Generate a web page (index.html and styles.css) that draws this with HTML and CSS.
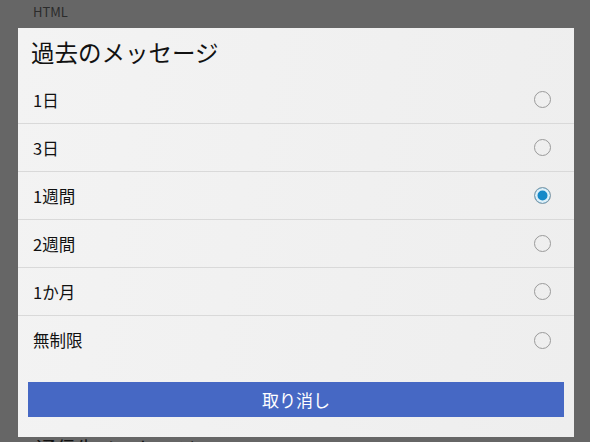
FILE: index.html
```html
<!DOCTYPE html>
<html lang="ja">
<head>
    <meta charset="UTF-8">
    <meta name="viewport" content="width=device-width, initial-scale=1.0">
    <title>過去のメッセージ</title>
    <link rel="stylesheet" href="styles.css">
</head>
<body>
    <div class="page-title">HTML</div>

    <div class="dialog">
        <h1>過去のメッセージ</h1>
        <ul class="options">
            <li class="option"><span>1日</span><span class="radio"></span></li>
            <li class="option"><span>3日</span><span class="radio"></span></li>
            <li class="option"><span>1週間</span><span class="radio checked"></span></li>
            <li class="option"><span>2週間</span><span class="radio"></span></li>
            <li class="option"><span>1か月</span><span class="radio"></span></li>
            <li class="option"><span>無制限</span><span class="radio"></span></li>
        </ul>
        <button class="cancel">取り消し</button>
    </div>

    <div class="section-title">通信先メッセージ</div>
</body>
</html>
```

FILE: styles.css
```css
body {
    margin: 0;
    background-color: #666666;
    font-family: "Noto Sans CJK JP", "Noto Sans", sans-serif;
    height: 442px;
    overflow: hidden;
}
.page-title {
    height: 28px;
    padding-left: 33px;
    font-size: 13px;
    line-height: 24px;
    color: #2b2b2b;
}
.dialog {
    width: 556px;
    margin-left: 18px;
    background: linear-gradient(100deg, #f3f3f3, #eeeeee);
    padding-bottom: 20px;
}
h1 {
    margin: 0;
    height: 48px;
    padding-left: 13px;
    font-size: 23.5px;
    font-weight: normal;
    line-height: 48px;
    color: #111;
}
.options {
    list-style: none;
    margin: 0;
    padding: 0;
}
.option {
    height: 48px;
    display: flex;
    align-items: center;
    justify-content: space-between;
    padding: 0 23px 0 15px;
    font-size: 16.5px;
    color: #111;
    border-bottom: 1px solid #d9d9d9;
    box-sizing: border-box;
}
.option:last-child {
    border-bottom: none;
}
.radio {
    width: 17px;
    height: 17px;
    border: 1.5px solid #9a9a9a;
    border-radius: 50%;
    box-sizing: border-box;
}
.radio.checked {
    background-color: #1689c8;
    box-shadow: inset 0 0 0 2.5px #dff0f8;
    border-color: #8fa0aa;
}
.cancel {
    display: block;
    width: 536px;
    height: 35px;
    margin: 18px auto 0;
    background-color: #4668c4;
    border: none;
    color: #fff;
    font-family: inherit;
    font-size: 17px;
}
.section-title {
    padding-left: 36px;
    font-size: 20px;
    line-height: 24px;
    color: #111;
}
```
